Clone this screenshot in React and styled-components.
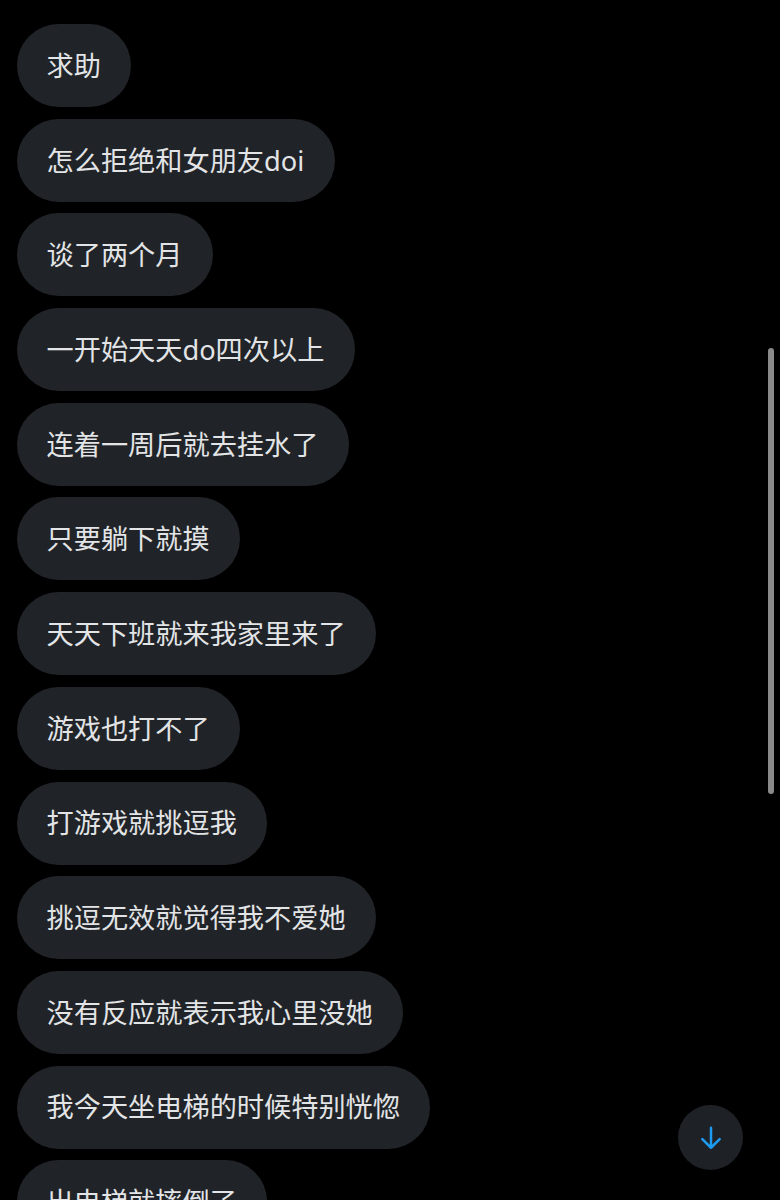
import React from "react";
import styled, { createGlobalStyle } from "styled-components";

const GlobalStyle = createGlobalStyle`
  html, body {
    margin: 0;
    padding: 0;
    background: #000;
    overflow: hidden;
  }
  body {
    font-family: "Noto Sans", "Noto Sans CJK SC", sans-serif;
  }
`;

const Screen = styled.div`
  position: relative;
  width: 780px;
  height: 1200px;
  background: #000;
  overflow: hidden;
`;

const Thread = styled.div`
  display: flex;
  flex-direction: column;
  align-items: flex-start;
  gap: 11.7px;
  padding: 24px 0 0 17px;
`;

const Bubble = styled.div`
  flex: none;
  height: 83px;
  display: flex;
  align-items: center;
  padding: 0 30.5px 0 29.5px;
  box-sizing: border-box;
  border-radius: 42px;
  background: #202327;
  color: #e2e4e6;
  font-family: "Noto Sans", "Noto Sans CJK SC", sans-serif;
  font-size: 27.2px;
  font-weight: 400;
  line-height: 1;
  white-space: nowrap;
`;

const ScrollThumb = styled.div`
  position: absolute;
  right: 6px;
  top: 348px;
  width: 6px;
  height: 446px;
  border-radius: 3px;
  background: #8a8a8a;
`;

const JumpButton = styled.button`
  position: absolute;
  left: 678px;
  top: 1105px;
  width: 65px;
  height: 65px;
  border: none;
  border-radius: 50%;
  background: #1e2125;
  display: flex;
  align-items: center;
  justify-content: center;
  padding: 0;
  cursor: pointer;
`;

const messages = [
  "求助",
  "怎么拒绝和女朋友doi",
  "谈了两个月",
  "一开始天天do四次以上",
  "连着一周后就去挂水了",
  "只要躺下就摸",
  "天天下班就来我家里来了",
  "游戏也打不了",
  "打游戏就挑逗我",
  "挑逗无效就觉得我不爱她",
  "没有反应就表示我心里没她",
  "我今天坐电梯的时候特别恍惚",
  "出电梯就摔倒了",
];

function ArrowDown() {
  return (
    <svg width="26" height="26" viewBox="0 0 24 24" fill="none">
      <path
        d="M12 2.5v18.5M4 13l8 8 8-8"
        stroke="#1d9bf0"
        strokeWidth="2.3"
        strokeLinecap="round"
        strokeLinejoin="round"
      />
    </svg>
  );
}

export default function App() {
  return (
    <>
      <GlobalStyle />
      <Screen>
        <Thread>
          {messages.map((m, i) => (
            <Bubble key={i}>{m}</Bubble>
          ))}
        </Thread>
        <ScrollThumb />
        <JumpButton aria-label="scroll to bottom">
          <ArrowDown />
        </JumpButton>
      </Screen>
    </>
  );
}
